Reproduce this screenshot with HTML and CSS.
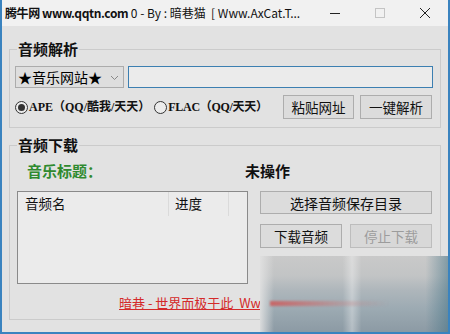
FILE: index.html
```html
<!DOCTYPE html>
<html lang="zh-CN">
<head>
<meta charset="utf-8">
<title>音频解析下载</title>
<link rel="stylesheet" href="styles.css">
</head>
<body>
<div class="window">
  <div class="titlebar">
    <span class="title"><b>腾牛网 www.qqtn.com</b> 0 - By : 暗巷猫 &nbsp;[ Www.AxCat.T...</span>
    <div class="controls">
      <span class="ctl"><svg width="12" height="12" viewBox="0 0 12 12"><path d="M1 6.5H11" stroke="#222" stroke-width="1"/></svg></span>
      <span class="ctl"><svg width="12" height="12" viewBox="0 0 12 12"><rect x="1.5" y="1.5" width="9" height="9" fill="none" stroke="#c4c4c4" stroke-width="1"/></svg></span>
      <span class="ctl"><svg width="12" height="12" viewBox="0 0 12 12"><path d="M1 1L11 11M11 1L1 11" stroke="#222" stroke-width="1"/></svg></span>
    </div>
  </div>
  <div class="body">
    <fieldset class="group g1">
      <legend>音频解析</legend>
      <div class="row1">
        <div class="combo"><span>★音乐网站★</span><svg class="arrow" width="9" height="6" viewBox="0 0 9 6"><path d="M1 1L4.5 4.5L8 1" fill="none" stroke="#888" stroke-width="1"/></svg></div>
        <div class="input"></div>
      </div>
      <div class="row2">
        <label class="radio"><span class="dot on"></span>APE（QQ/酷我/天天）</label>
        <label class="radio second"><span class="dot"></span>FLAC（QQ/天天）</label>
        <div class="btns">
          <div class="btn small">粘贴网址</div>
          <div class="btn small">一键解析</div>
        </div>
      </div>
    </fieldset>
    <fieldset class="group g2">
      <legend>音频下载</legend>
      <div class="status">
        <span class="music-title">音乐标题：</span>
        <span class="state">未操作</span>
      </div>
      <div class="main">
        <div class="list">
          <div class="list-head">
            <span class="col1">音频名</span>
            <span class="col2">进度</span>
            <span class="col3"></span>
          </div>
        </div>
        <div class="actions">
          <div class="btn wide">选择音频保存目录</div>
          <div class="btn-row">
            <div class="btn">下载音频</div>
            <div class="btn disabled">停止下载</div>
          </div>
          <div class="btn-row">
            <div class="btn blank"></div>
            <div class="btn blank"></div>
          </div>
        </div>
      </div>
      <div class="link">暗巷 - 世界而极于此 &nbsp;Www.AxCat.Top</div>
    </fieldset>
  </div>
  <div class="smear"><div class="streak"></div></div>
</div>
</body>
</html>
```

FILE: styles.css
```css
* { box-sizing: border-box; }
html, body { margin: 0; padding: 0; }
body {
  width: 450px;
  height: 334px;
  overflow: hidden;
  font-family: "Noto Sans CJK SC", "Noto Sans", sans-serif;
  color: #000;
}
.window {
  position: relative;
  width: 450px;
  height: 334px;
  background: #e2e2e2;
  border-left: 2px solid #3a83bf;
  border-right: 2px solid #3a83bf;
  border-bottom: 2px solid #3a83bf;
  overflow: hidden;
}
.titlebar {
  height: 26px;
  background: #f1f1f1;
  display: flex;
  align-items: center;
  padding-left: 3px;
}
.title {
  font-size: 12px;
  line-height: 16px;
  white-space: nowrap;
  color: #111;
  flex: 1;
}
.title b { font-weight: 700; letter-spacing: -0.4px; }
.controls {
  display: flex;
  align-items: center;
  height: 26px;
}
.ctl {
  width: 45px;
  height: 26px;
  display: flex;
  align-items: center;
  justify-content: center;
}
.ctl:last-child { width: 46px; }

.body { padding: 0 7px; }

.group {
  margin: 0;
  padding: 0;
  border: 1px solid #cbcbcb;
  min-width: 0;
}
.group legend {
  margin-left: 7px;
  padding: 0 1px;
  font-size: 15px;
  line-height: 20px;
  font-weight: 700;
  color: #111;
}
.g1 { margin-top: 13px; padding-bottom: 8px; }
.g2 { margin-top: 7px; padding-bottom: 7px; }

.row1 {
  margin-top: 7px;
  display: flex;
  gap: 4px;
  padding-left: 5px;
  padding-right: 7px;
}
.combo {
  width: 109px;
  height: 22px;
  border: 1px solid #acacac;
  background: #dedede;
  display: flex;
  align-items: center;
  justify-content: space-between;
  padding: 0 4px 0 2px;
  font-size: 14px;
  line-height: 20px;
  color: #000;
}
.arrow { margin-top: 1px; }
.input {
  flex: 1;
  height: 22px;
  border: 1px solid #3c7fb1;
  background: #ebebeb;
}
.row2 {
  margin-top: 7px;
  display: flex;
  align-items: center;
  padding-left: 5px;
  padding-right: 8px;
  height: 24px;
}
.radio {
  display: flex;
  align-items: center;
  font-family: "Liberation Serif", "Noto Sans CJK SC", serif;
  font-weight: 700;
  font-size: 12px;
  line-height: 16px;
  white-space: nowrap;
  color: #111;
}
.dot {
  width: 13px;
  height: 13px;
  border: 1px solid #333;
  border-radius: 50%;
  background: #ececec;
  margin-right: 1px;
  display: flex;
  align-items: center;
  justify-content: center;
}
.dot.on::after {
  content: "";
  width: 7px;
  height: 7px;
  border-radius: 50%;
  background: #333;
}
.radio.second { margin-left: 4px; letter-spacing: -0.3px; }
.btns {
  margin-left: auto;
  display: flex;
  gap: 6px;
}
.btn {
  height: 24px;
  border: 1px solid #adadad;
  background: #dcdcdc;
  display: flex;
  align-items: center;
  justify-content: center;
  font-size: 13.5px;
  line-height: 18px;
  color: #111;
  white-space: nowrap;
}
.btn.small { width: 71px; }
.btn.small + .btn.small { width: 72px; }

.status {
  margin-top: 6px;
  display: flex;
  height: 20px;
  align-items: center;
  padding-left: 17px;
  font-size: 15px;
  line-height: 20px;
  font-weight: 700;
}
.music-title { color: #2f8a2f; width: 218px; }
.state { color: #111; }

.main {
  margin-top: 10px;
  display: flex;
  padding-left: 7px;
  gap: 12px;
}
.list {
  width: 231px;
  height: 93px;
  border: 1px solid #8a8a8a;
  background: #ebebeb;
}
.list-head {
  display: flex;
  height: 24px;
  font-size: 13.5px;
  line-height: 22px;
  color: #111;
}
.list-head span { border-right: 1px solid #dadada; }
.col1 { width: 151px; padding-left: 7px; }
.col2 { width: 60px; padding-left: 6px; }
.col3 { width: 18px; border-right: none !important; }

.actions {
  width: 172px;
  display: flex;
  flex-direction: column;
  gap: 10px;
}
.btn.wide { height: 23px; font-size: 14px; }
.btn-row {
  display: flex;
  gap: 8px;
}
.btn-row .btn { width: 82px; height: 24px; }
.btn.disabled { color: #9c9c9c; border-color: #bdbdbd; background: #d8d8d8; }
.btn.blank { background: #cdcdcd; border-color: #bbb; }

.link {
  margin-top: 10px;
  padding-left: 109px;
  font-size: 13px;
  line-height: 18px;
  color: #d42a2a;
  text-decoration: underline;
  white-space: nowrap;
}

.smear {
  position: absolute;
  left: 258px;
  top: 256px;
  right: 0;
  bottom: 0;
  background:
    linear-gradient(to right, rgba(226,226,226,0.9) 0px, rgba(226,226,226,0) 14px),
    linear-gradient(to right, rgba(255,255,255,0) 44%, rgba(255,255,255,0.35) 49%, rgba(255,255,255,0) 54%),
    linear-gradient(to right, rgba(0,0,0,0) 88%, rgba(60,110,130,0.5) 100%),
    linear-gradient(to bottom, #c9c9c9 0%, #c2c4c5 26%, #aeb6bb 45%, #9caab2 70%, #8c9aa4 100%);
}
.streak {
  position: absolute;
  left: 10px;
  top: 45px;
  width: 120px;
  height: 5px;
  background: linear-gradient(to right, rgba(205,90,90,0.85), rgba(200,130,130,0.35) 60%, rgba(200,140,140,0) 100%);
  filter: blur(1px);
}
```
